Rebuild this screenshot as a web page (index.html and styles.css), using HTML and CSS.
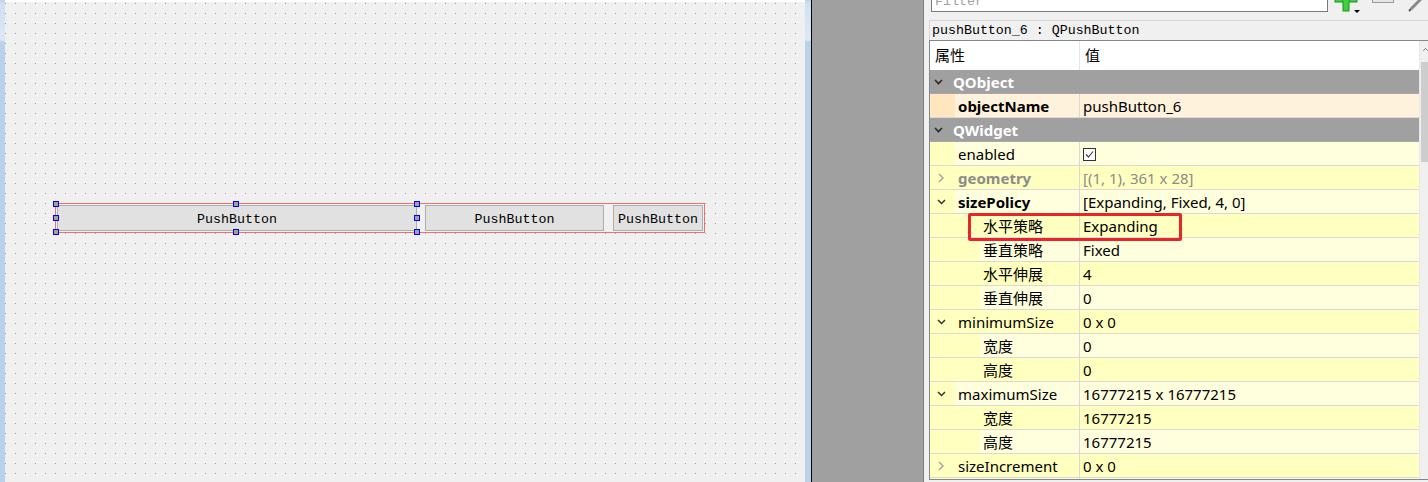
FILE: index.html
```html
<!DOCTYPE html>
<html>
<head>
<meta charset="utf-8">
<link rel="stylesheet" href="styles.css">
</head>
<body>
<div class="app">
  <div class="lstrip"></div>
  <div class="canvas">
    <div class="layout">
      <div class="pbtn w1">PushButton</div>
      <div class="pbtn w2">PushButton</div>
      <div class="pbtn w3">PushButton</div>
    </div>
    <span class="handle hx1 hy1"></span>
    <span class="handle hx2 hy1"></span>
    <span class="handle hx3 hy1"></span>
    <span class="handle hx1 hy2"></span>
    <span class="handle hx3 hy2"></span>
    <span class="handle hx1 hy3"></span>
    <span class="handle hx2 hy3"></span>
    <span class="handle hx3 hy3"></span>
  </div>
  <div class="splitter"></div>
  <div class="gray"></div>
  <div class="panel">
    <div class="toolbar">
      <div class="filter">Filter</div>
      <svg class="ic-plus" width="26" height="14" viewBox="0 0 26 14">
        <rect x="1" y="-6" width="22" height="8" fill="#3fcf3f" stroke="#1f8f1f" stroke-width="1"/>
        <rect x="9" y="-6" width="6" height="17" fill="#3fcf3f" stroke="#1f8f1f" stroke-width="1"/>
        <rect x="9.5" y="-6" width="5" height="8" fill="#3fcf3f"/>
        <polygon points="20,10 26,10 23,13" fill="#000"/>
      </svg>
      <svg class="ic-rect" width="22" height="4" viewBox="0 0 22 4">
        <rect x="0.5" y="-4" width="21" height="6.5" fill="#e6e6e6" stroke="#9a9a9a"/>
      </svg>
      <svg class="ic-pen" width="14" height="12" viewBox="0 0 14 12">
        <line x1="13" y1="-1" x2="3" y2="9" stroke="#8a8a8a" stroke-width="3"/>
        <line x1="3" y1="9" x2="1" y2="11" stroke="#555" stroke-width="2"/>
      </svg>
    </div>
    <div class="objlabel">pushButton_6 : QPushButton</div>
    <div class="tree">
      <div class="tbody">
        <div class="hdr">
          <div class="hname">属性</div>
          <div class="hval">值</div>
        </div>

        <div class="row grp">
          <div class="ind"><svg class="chev-d g" width="9" height="6" viewBox="0 0 9 6"><polyline points="1,1 4.5,4.5 8,1" fill="none" stroke="#2a2a2a" stroke-width="1.6"/></svg></div>
          <div class="gname">QObject</div>
        </div>

        <div class="row peach alt">
          <div class="nm"><div class="ind"></div><span class="b">objectName</span></div>
          <div class="val">pushButton_6</div>
        </div>

        <div class="row grp">
          <div class="ind"><svg class="chev-d g" width="9" height="6" viewBox="0 0 9 6"><polyline points="1,1 4.5,4.5 8,1" fill="none" stroke="#2a2a2a" stroke-width="1.6"/></svg></div>
          <div class="gname">QWidget</div>
        </div>

        <div class="row yel alt">
          <div class="nm"><div class="ind"></div><span>enabled</span></div>
          <div class="val"><span class="cb"><svg width="11" height="11" viewBox="0 0 11 11"><polyline points="2,5.5 4.5,8 9,2.5" fill="none" stroke="#333" stroke-width="1.1"/></svg></span></div>
        </div>

        <div class="row yel">
          <div class="nm"><div class="ind"><svg class="chev-r" width="6" height="10" viewBox="0 0 6 10"><polyline points="1,1 5,5 1,9" fill="none" stroke="#a0a0a0" stroke-width="1.4"/></svg></div><span class="b dim">geometry</span></div>
          <div class="val dim">[(1, 1), 361 x 28]</div>
        </div>

        <div class="row yel alt">
          <div class="nm"><div class="ind"><svg class="chev-d" width="9" height="6" viewBox="0 0 9 6"><polyline points="1,1 4.5,4.5 8,1" fill="none" stroke="#333" stroke-width="1.5"/></svg></div><span class="b">sizePolicy</span></div>
          <div class="val">[Expanding, Fixed, 4, 0]</div>
        </div>

        <div class="row yel child">
          <div class="nm"><div class="ind"></div><span>水平策略</span></div>
          <div class="val">Expanding</div>
        </div>
        <div class="row yel alt child">
          <div class="nm"><div class="ind"></div><span>垂直策略</span></div>
          <div class="val">Fixed</div>
        </div>
        <div class="row yel child">
          <div class="nm"><div class="ind"></div><span>水平伸展</span></div>
          <div class="val">4</div>
        </div>
        <div class="row yel alt child">
          <div class="nm"><div class="ind"></div><span>垂直伸展</span></div>
          <div class="val">0</div>
        </div>

        <div class="row yel">
          <div class="nm"><div class="ind"><svg class="chev-d" width="9" height="6" viewBox="0 0 9 6"><polyline points="1,1 4.5,4.5 8,1" fill="none" stroke="#333" stroke-width="1.5"/></svg></div><span>minimumSize</span></div>
          <div class="val">0 x 0</div>
        </div>
        <div class="row yel alt child">
          <div class="nm"><div class="ind"></div><span>宽度</span></div>
          <div class="val">0</div>
        </div>
        <div class="row yel child">
          <div class="nm"><div class="ind"></div><span>高度</span></div>
          <div class="val">0</div>
        </div>

        <div class="row yel alt">
          <div class="nm"><div class="ind"><svg class="chev-d" width="9" height="6" viewBox="0 0 9 6"><polyline points="1,1 4.5,4.5 8,1" fill="none" stroke="#333" stroke-width="1.5"/></svg></div><span>maximumSize</span></div>
          <div class="val">16777215 x 16777215</div>
        </div>
        <div class="row yel child">
          <div class="nm"><div class="ind"></div><span>宽度</span></div>
          <div class="val">16777215</div>
        </div>
        <div class="row yel alt child">
          <div class="nm"><div class="ind"></div><span>高度</span></div>
          <div class="val">16777215</div>
        </div>

        <div class="row yel">
          <div class="nm"><div class="ind"><svg class="chev-r" width="6" height="10" viewBox="0 0 6 10"><polyline points="1,1 5,5 1,9" fill="none" stroke="#a0a0a0" stroke-width="1.4"/></svg></div><span>sizeIncrement</span></div>
          <div class="val">0 x 0</div>
        </div>
        <div class="row yel alt">
          <div class="nm"><div class="ind"></div></div>
          <div class="val"></div>
        </div>
      </div>
      <div class="vscroll">
        <div class="sb-up"><svg width="7" height="5" viewBox="0 0 7 5"><polyline points="0.5,4 3.5,1 6.5,4" fill="none" stroke="#606060" stroke-width="1.2"/></svg></div>
        <div class="sb-thumb"></div>
      </div>
      <div class="hl"></div>
    </div>
  </div>
</div>
</body>
</html>
```
FILE: styles.css
```css
* { box-sizing: border-box; margin: 0; padding: 0; }
html, body { width: 1428px; height: 482px; overflow: hidden; }
body {
  font-family: "Noto Sans", "Noto Sans CJK SC", sans-serif;
  background: #f0f0f0;
  color: #000;
}
.app { display: flex; height: 482px; }

.lstrip {
  width: 5px; flex: none;
  background: linear-gradient(#b9d1ea 0, #cfe0f3 3px, #dce9f7 40px, #b9d1ea 42px);
}
.canvas {
  position: relative;
  width: 800px; flex: none;
  border-top: 2px solid #fff;
  background-color: #f0f0f0;
  background-image: conic-gradient(at 1px 1px, transparent 75%, #a0a0a0 0);
  background-size: 10px 10px;
  background-position: 0 1px;
}
.layout {
  position: absolute;
  left: 50px; top: 201px;
  width: 650px; height: 30px;
  border: 1px solid #f07070;
  padding: 1px 0 0 1px;
  display: flex;
  align-items: flex-start;
  background: #f0f0f0;
}
.pbtn {
  height: 26px;
  border: 1px solid #adadad;
  background: #e1e1e1;
  font-family: "Liberation Mono", "DejaVu Sans Mono", monospace;
  font-size: 13.3px;
  line-height: 24px;
  padding-top: 2px;
  text-align: center;
  flex: none;
}
.w1 { width: 360px; }
.w2 { width: 179px; margin-left: 8px; }
.w3 { width: 90px; margin-left: 9px; }

.handle {
  position: absolute;
  width: 6px; height: 6px;
  border: 1px solid #0000ff;
  background: #a0a0a0;
}
.hx1 { left: 48px; }
.hx2 { left: 228px; }
.hx3 { left: 409px; }
.hy1 { top: 199px; }
.hy2 { top: 213px; }
.hy3 { top: 227px; }

.splitter {
  width: 7px; flex: none;
  background: linear-gradient(#b9d1ea 0, #cfe0f3 3px, #dce9f7 40px, #b9d1ea 42px);
  border-right: 1px solid #000;
}
.gray {
  width: 112px; flex: none;
  background: #a0a0a0;
  border-right: 1px solid #7c7c7c;
}
.panel {
  width: 504px; flex: none;
  padding-left: 5px;
  display: flex;
  flex-direction: column;
  background: #f0f0f0;
}
.toolbar {
  height: 20px; flex: none;
  display: flex;
  align-items: flex-start;
}
.filter {
  margin-left: 2px;
  margin-top: -10px;
  width: 397px; height: 22px;
  border: 1px solid #7a7a7a;
  background: #fff;
  color: #a0a0a0;
  font-family: "Liberation Mono", monospace;
  font-size: 13.3px;
  line-height: 22px;
  padding-left: 3px;
}
.ic-plus { margin-left: 6px; display: block; }
.ic-rect { margin-left: 12px; display: block; }
.ic-pen { margin-left: 14px; display: block; }

.objlabel {
  height: 20px; flex: none;
  border-top: 1px solid #d6d6d6;
  border-left: 1px solid #d6d6d6;
  padding-left: 2px;
  font-family: "Liberation Mono", monospace;
  font-size: 13.3px;
  line-height: 19px;
  white-space: nowrap;
}
.tree {
  position: relative;
  height: 440px; flex: none;
  border-top: 1px solid #828790;
  border-left: 1px solid #828790;
  border-bottom: 1px solid #828790;
  display: flex;
  overflow: hidden;
  background: #fff;
}
.tbody { width: 489px; flex: none; font-size: 15px; }
.hdr {
  height: 29px;
  display: flex;
  background: #fff;
  line-height: 29px;
}
.hname { width: 149px; padding-left: 5px; }
.hval { flex: 1; border-left: 1px solid #e5e5e5; padding-left: 5px; }

.row {
  height: 24px;
  display: flex;
  border-bottom: 1px solid #d9d9d9;
  line-height: 23px;
  padding-top: 1px;
  white-space: nowrap;
}
.nm { width: 149px; flex: none; display: flex; margin-top: -1px; padding-top: 1px; }
.nm span { padding-left: 3px; }
.ind { width: 25px; flex: none; display: flex; align-items: center; margin-top: -1px; }
.child .ind { width: 50px; }
.val {
  flex: 1;
  border-left: 1px solid #d9d9d9;
  padding-left: 3px;
  display: flex;
  align-items: center;
  margin-top: -1px;
  padding-top: 1px;
}
.b { font-weight: bold; }
.dim { color: #8c8c8c; }

.grp {
  background: #a0a0a0;
  color: #fff;
  font-weight: bold;
  border-bottom-color: #a8a8a8;
}
.grp .ind { width: 20px; margin-top: 0; }
.gname { padding-left: 3px; }

.peach { background: #ffe6bf; }
.peach.alt { background: #fff2dd; }
.peach .ind { background: #ffe6bf; }
.yel { background: #ffffbf; }
.yel.alt { background: #ffffdd; }
.yel .ind { background: #ffffbf; }

.chev-d { margin-left: 7px; display: block; }
.chev-d.g { margin-left: 4px; }
.chev-r { margin-left: 8px; display: block; }

.cb {
  width: 13px; height: 13px;
  border: 1px solid #333;
  background: #fff;
  display: flex;
  align-items: center;
  justify-content: center;
}
.cb svg { display: block; }

.vscroll {
  width: 9px; flex: none;
  background: #f0f0f0;
  border-left: 1px solid #e8e8e8;
}
.sb-up { height: 17px; display: flex; align-items: center; padding-left: 3px; }
.sb-up svg { display: block; }
.sb-thumb {
  margin-top: 4px;
  margin-left: 1px;
  height: 100px;
  background: #cdcdcd;
}
.hl {
  position: absolute;
  left: 38px; top: 172px;
  width: 214px; height: 28px;
  border: 3px solid #e8252b;
  border-radius: 2px;
}
```
